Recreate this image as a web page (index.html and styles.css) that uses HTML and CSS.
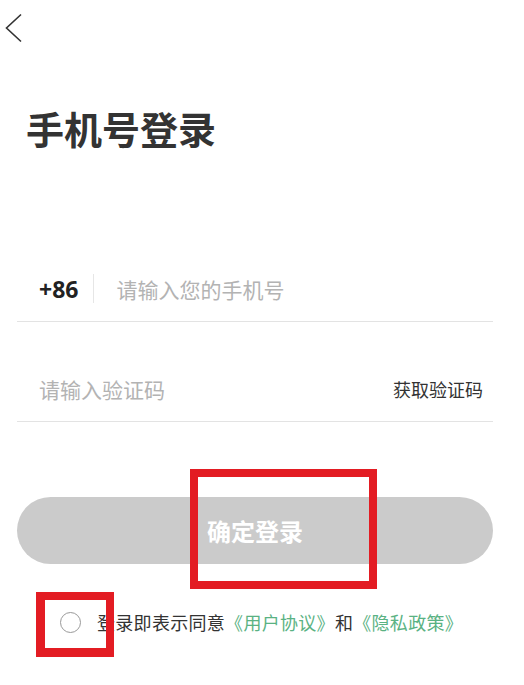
FILE: index.html
```html
<!DOCTYPE html>
<html lang="zh-CN">
<head>
	<meta charset="UTF-8">
	<title>手机号登录</title>
	<link rel="stylesheet" href="styles.css">
</head>
<body>
	<div class="page">
		<div class="header">
			<a href="javascript:;" class="back">
				<svg width="18" height="32" viewBox="0 0 18 32">
					<polyline points="16,1.5 1.5,15 16,28.5" fill="none" stroke="#333" stroke-width="1.6" stroke-linejoin="miter"/>
				</svg>
			</a>
		</div>
		<h1 class="title">手机号登录</h1>

		<div class="form">
			<div class="row">
				<span class="code">+86</span>
				<span class="sep"></span>
				<span class="holder">请输入您的手机号</span>
			</div>
			<div class="row row-code">
				<span class="holder">请输入验证码</span>
				<a href="javascript:;" class="get-code">获取验证码</a>
			</div>
			<a href="javascript:;" class="btn">确定登录</a>
			<div class="agree">
				<span class="radio"></span>
				<span class="agree-text">登录即表示同意<a href="javascript:;">《用户协议》</a>和<a href="javascript:;">《隐私政策》</a></span>
			</div>
		</div>

		<!-- 标注框 -->
		<div class="mark mark-btn"></div>
		<div class="mark mark-radio"></div>
	</div>
</body>
</html>
```
FILE: styles.css
```css
* {
	margin: 0;
	padding: 0;
	box-sizing: border-box;
}
body {
	background: #fff;
	font-family: "Noto Sans CJK SC", "Noto Sans", sans-serif;
	color: #333;
}
a {
	text-decoration: none;
}
.page {
	width: 524px;
	height: 685px;
	position: relative;
	overflow: hidden;
}
.header {
	height: 56px;
	padding: 13px 0 0 5px;
}
.back {
	display: block;
	width: 18px;
	height: 32px;
}
.back svg {
	display: block;
}
.title {
	margin: 52px 0 0 26px;
	font-size: 38px;
	line-height: 40px;
	font-weight: bold;
	color: #333;
}
.form {
	width: 476px;
	margin-left: 17px;
}
.row {
	display: flex;
	align-items: center;
	height: 66px;
	margin-top: 108px;
	padding: 0 10px 0 22px;
	border-bottom: 1px solid #e3e3e3;
}
.row-code {
	margin-top: 34px;
	justify-content: space-between;
}
.code {
	font-family: "Open Sans", "Noto Sans", sans-serif;
	font-size: 23px;
	font-weight: bold;
	color: #222;
}
.sep {
	width: 1px;
	height: 29px;
	background: #e6e6e6;
	margin: 0 22px 0 15px;
}
.holder {
	font-size: 21px;
	color: #b3b3b3;
}
.get-code {
	font-size: 18px;
	color: #333;
}
.btn {
	display: block;
	height: 67px;
	margin-top: 75px;
	border-radius: 34px;
	background: #cbcbcb;
	color: #fff;
	font-size: 24px;
	font-weight: bold;
	line-height: 67px;
	text-align: center;
}
.agree {
	display: flex;
	align-items: center;
	height: 40px;
	margin-top: 38px;
	padding-left: 43px;
}
.radio {
	width: 21px;
	height: 21px;
	border: 1px solid #999;
	border-radius: 50%;
	margin-right: 16px;
}
.agree-text {
	font-size: 18px;
	letter-spacing: 0.3px;
	color: #333;
}
.agree-text a {
	color: #5ab283;
}
.mark {
	position: absolute;
	border: 8px solid #e31c23;
}
.mark-btn {
	left: 190px;
	top: 469px;
	width: 187px;
	height: 120px;
}
.mark-radio {
	left: 36px;
	top: 592px;
	width: 78px;
	height: 65px;
	border-width: 8px 8px 9px 9px;
}
```
